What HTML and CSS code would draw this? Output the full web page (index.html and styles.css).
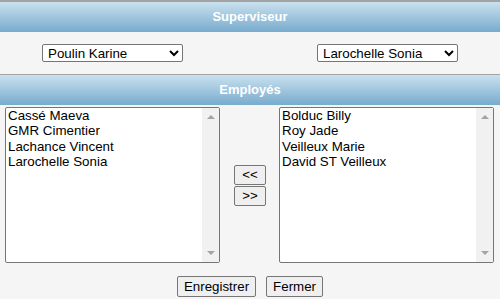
FILE: index.html
```html
<!DOCTYPE html>
<html lang="fr">
<head>
    <meta charset="UTF-8">
    <title>Superviseur et employés</title>
    <link rel="stylesheet" href="styles.css">
</head>
<body>
    <div class="page">
        <div class="band">Superviseur</div>
        <div class="supervisors">
            <select class="picker">
                <option>Poulin Karine</option>
            </select>
            <select class="picker">
                <option>Larochelle Sonia</option>
            </select>
        </div>

        <div class="band">Employés</div>
        <div class="transfer">
            <div class="listbox">
                <div class="items">
                    <div class="item">Cassé Maeva</div>
                    <div class="item">GMR Cimentier</div>
                    <div class="item">Lachance Vincent</div>
                    <div class="item">Larochelle Sonia</div>
                </div>
                <div class="scrollbar">
                    <span class="arrow up"></span>
                    <span class="arrow down"></span>
                </div>
            </div>

            <div class="moves">
                <button class="btn move">&lt;&lt;</button>
                <button class="btn move">&gt;&gt;</button>
            </div>

            <div class="listbox">
                <div class="items">
                    <div class="item">Bolduc Billy</div>
                    <div class="item">Roy Jade</div>
                    <div class="item">Veilleux Marie</div>
                    <div class="item">David ST Veilleux</div>
                </div>
                <div class="scrollbar">
                    <span class="arrow up"></span>
                    <span class="arrow down"></span>
                </div>
            </div>
        </div>

        <div class="actions">
            <button class="btn">Enregistrer</button>
            <button class="btn">Fermer</button>
        </div>
    </div>
</body>
</html>
```

FILE: styles.css
```css
body {
    margin: 0;
    background-color: #f5f5f5;
    font-family: "Liberation Sans", Arial, sans-serif;
    font-size: 13.33px;
    color: #000;
}

.page {
    border-top: 1px solid #a3a3a3;
}

/* blue title bars */
.band {
    height: 30px;
    line-height: 30px;
    border-top: 1px solid #a3a3a3;
    background: linear-gradient(#c9e1ef, #78abcd);
    color: #fff;
    font-weight: bold;
    font-size: 13px;
    text-align: center;
}

.supervisors {
    height: 42px;
    display: flex;
    align-items: center;
    justify-content: space-between;
    padding: 0 42px;
}

.picker {
    width: 141px;
    height: 18px;
    font-family: "Liberation Sans", Arial, sans-serif;
    font-size: 13.33px;
    border: 1px solid #767676;
    border-radius: 2px;
    background-color: #fff;
    color: #000;
    padding: 0 1px;
}

.transfer {
    display: grid;
    grid-template-columns: 215px 1fr 215px;
    align-items: center;
    padding: 2px 6px 0 5px;
}

.listbox {
    height: 154px;
    display: flex;
    border: 1px solid #767676;
    border-radius: 2px;
    background-color: #fff;
}

.items {
    flex: 1;
    padding: 0 2px;
}

.item {
    line-height: 15.4px;
}

.scrollbar {
    width: 17px;
    background-color: #f1f1f1;
    display: flex;
    flex-direction: column;
    justify-content: space-between;
    align-items: center;
    padding: 7px 0;
    box-sizing: border-box;
}

.arrow {
    width: 0;
    height: 0;
    border-left: 4px solid transparent;
    border-right: 4px solid transparent;
}

.arrow.up {
    border-bottom: 4px solid #a3a3a3;
}

.arrow.down {
    border-top: 4px solid #a3a3a3;
}

.moves {
    display: flex;
    flex-direction: column;
    align-items: center;
    gap: 1px;
    padding-left: 1px;
}

.btn {
    font-family: "Liberation Sans", Arial, sans-serif;
    font-size: 13.33px;
    color: #000;
    background-color: #efefef;
    border: 1px solid #767676;
    border-radius: 2px;
    padding: 2px 6px;
    margin: 0;
}

.move {
    width: 32px;
    height: 20px;
    padding: 0;
}

.actions {
    display: flex;
    justify-content: center;
    gap: 10px;
    padding-top: 13px;
}
```
